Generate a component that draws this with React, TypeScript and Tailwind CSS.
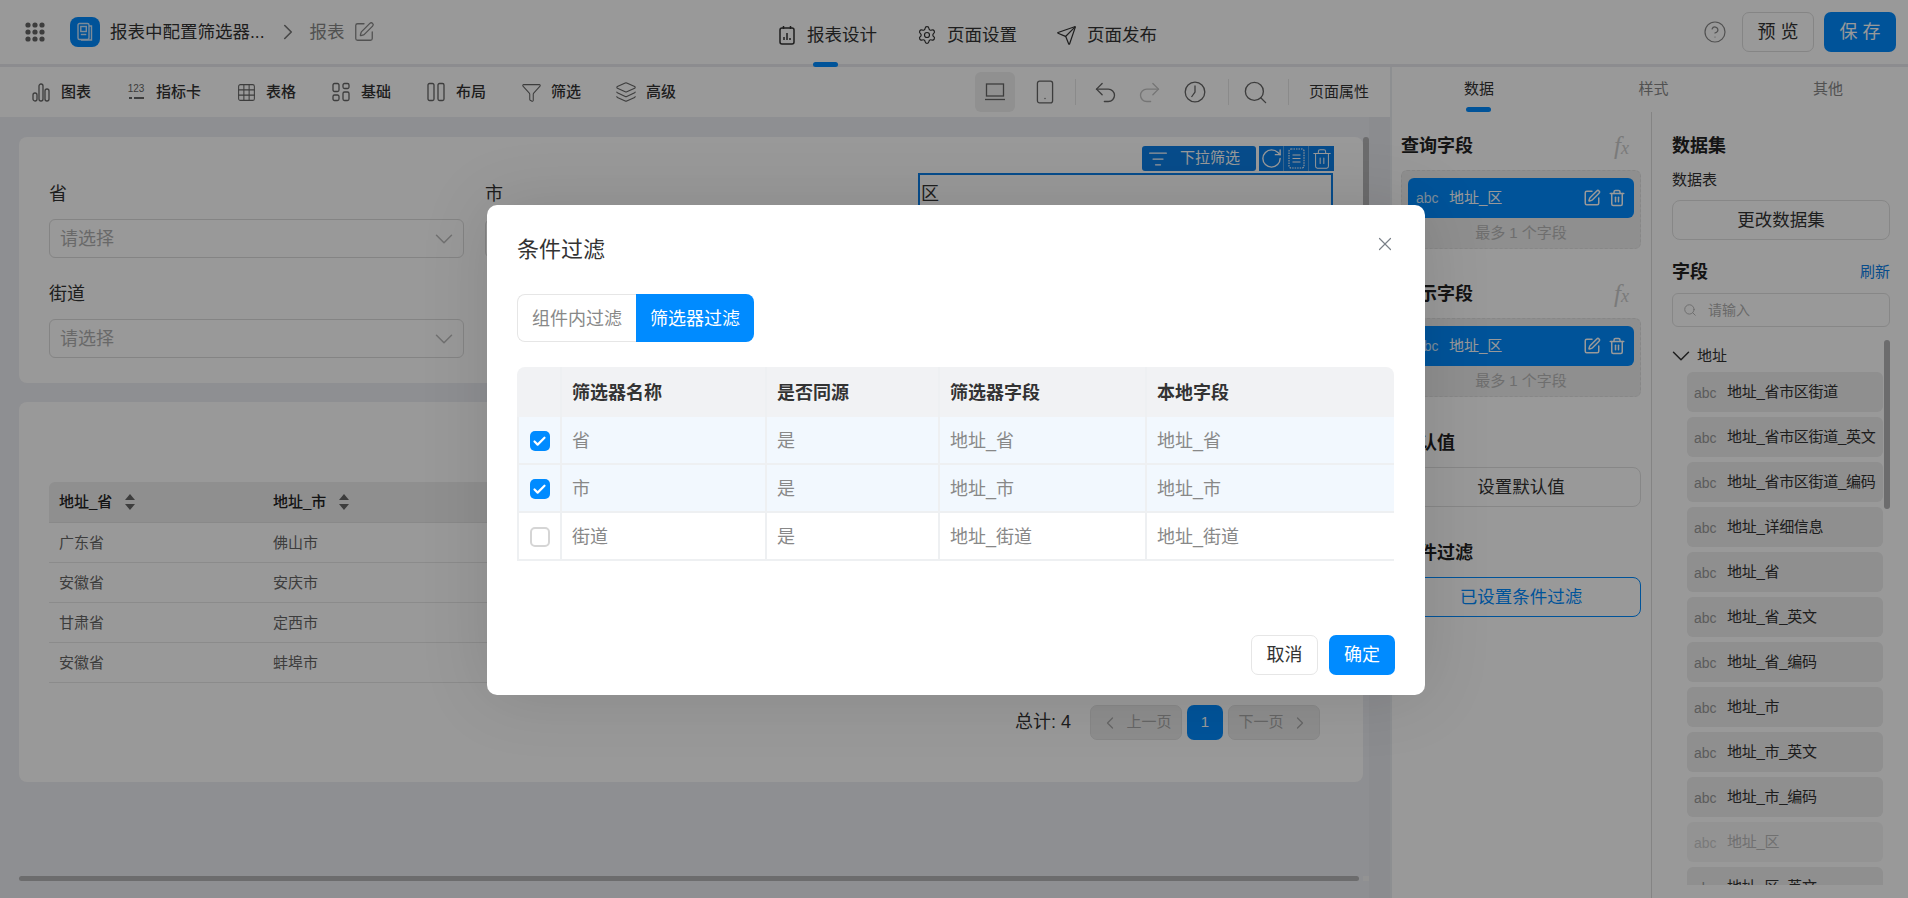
import { Undo2, Redo2, Smartphone, Search, Settings, Send, ChevronRight, ChevronDown, ChevronLeft, SquarePen, Trash2, CircleHelp, X, Check, Layers, Funnel, ListFilter, RotateCw, Grid3x3 } from "lucide-react";

const fields = [
  "地址_省市区街道",
  "地址_省市区街道_英文",
  "地址_省市区街道_编码",
  "地址_详细信息",
  "地址_省",
  "地址_省_英文",
  "地址_省_编码",
  "地址_市",
  "地址_市_英文",
  "地址_市_编码",
  "地址_区",
  "地址_区_英文",
];

const previewRows = [
  ["广东省", "佛山市"],
  ["安徽省", "安庆市"],
  ["甘肃省", "定西市"],
  ["安徽省", "蚌埠市"],
];

const filterRows = [
  { name: "省", same: "是", field: "地址_省", local: "地址_省", checked: true },
  { name: "市", same: "是", field: "地址_市", local: "地址_市", checked: true },
  { name: "街道", same: "是", field: "地址_街道", local: "地址_街道", checked: false },
];

function DotsIcon() {
  return (
    <svg width="20" height="20" viewBox="0 0 20 20" fill="#666">
      {[3, 10, 17].map((y) => [3, 10, 17].map((x) => <circle key={`${x}-${y}`} cx={x} cy={y} r="2.6" />))}
    </svg>
  );
}

function LogoIcon() {
  return (
    <div className="flex h-[30px] w-[30px] items-center justify-center rounded-[8px] bg-[#008bff]">
      <svg width="18" height="20" viewBox="0 0 18 20" fill="none" stroke="#cfe8ff" strokeWidth="1.4">
        <rect x="2" y="1.5" width="11" height="16" rx="1.5" />
        <path d="M13 4h2.5v14H5" />
        <rect x="4.8" y="4.5" width="5.5" height="5" />
        <path d="M4.8 12.5h5.5" />
      </svg>
    </div>
  );
}

function ReportIcon() {
  return (
    <svg width="16" height="20" viewBox="0 0 16 20" fill="none" stroke="#333" strokeWidth="1.5">
      <rect x="1" y="3" width="14" height="16" rx="2" />
      <path d="M4.5 1v3M11.5 1v3M5 15v-3M8 15V8M11 15v-2" />
    </svg>
  );
}

function BarsIcon() {
  return (
    <svg width="18" height="20" viewBox="0 0 18 20" fill="none" stroke="#666" strokeWidth="1.3">
      <rect x="1" y="11" width="4" height="8" rx="2" />
      <rect x="7" y="2" width="4" height="17" rx="2" />
      <rect x="13" y="7" width="4" height="12" rx="2" />
    </svg>
  );
}

function NumberIcon() {
  return (
    <span className="flex h-[20px] w-[18px] flex-col items-center text-[#666]">
      <span className="text-[10px] leading-[14px]">123</span>
      <span className="mt-[1px] flex items-center gap-[2px]">
        <span className="h-[2px] w-[3px] bg-[#666]" />
        <span className="h-[2px] w-[10px] bg-[#666]" />
      </span>
    </span>
  );
}

function BlocksIcon() {
  return (
    <svg width="18" height="20" viewBox="0 0 18 20" fill="none" stroke="#666" strokeWidth="1.3">
      <rect x="1" y="1.5" width="6" height="8" rx="1.5" />
      <rect x="11" y="1.5" width="6" height="5" rx="1.5" />
      <rect x="1" y="13" width="6" height="5.5" rx="1.5" />
      <rect x="11" y="10" width="6" height="8.5" rx="1.5" />
    </svg>
  );
}

function ColumnsIcon() {
  return (
    <svg width="18" height="20" viewBox="0 0 18 20" fill="none" stroke="#666" strokeWidth="1.3">
      <rect x="1" y="1.5" width="6" height="17" rx="1.5" />
      <rect x="11" y="1.5" width="6" height="17" rx="1.5" />
    </svg>
  );
}

function LaptopIcon() {
  return (
    <svg width="22" height="20" viewBox="0 0 22 20" fill="none" stroke="#666" strokeWidth="1.3">
      <rect x="2.5" y="2" width="17" height="12" />
      <path d="M1 17.5h20" />
    </svg>
  );
}

function ClockIcon() {
  return (
    <svg width="22" height="22" viewBox="0 0 22 22" fill="none" stroke="#666" strokeWidth="1.3">
      <circle cx="11" cy="11" r="9.8" />
      <path d="M11 4.5V11l-3.5 5" />
    </svg>
  );
}

function SortIcon() {
  return (
    <svg width="10" height="16" viewBox="0 0 10 16" fill="#666" className="ml-[13px]">
      <path d="M5 0l5 6H0zM5 16L0 10h10z" />
    </svg>
  );
}

function DashedDocIcon() {
  return (
    <svg width="17" height="21" viewBox="0 0 17 21" fill="none" stroke="#fff" strokeWidth="1.1">
      <rect x="1" y="1" width="15" height="19" rx="2" strokeDasharray="1.5 1" />
      <path d="M4.5 7h8M4.5 10.5h8M4.5 14h8" />
    </svg>
  );
}

function Fx() {
  return (
    <span className="ml-auto mr-[12px] h-[24px] font-['Liberation_Serif',serif] text-[25px] italic leading-[24px] text-[#ccc]">
      f<span className="text-[18px]">x</span>
    </span>
  );
}

function ToolItem({ icon, label }: { icon: React.ReactNode; label: string }) {
  return (
    <div className="flex items-center gap-[11px]">
      <span className="flex w-[18px] justify-center [&>svg]:shrink-0">{icon}</span>
      <span className="text-[15px] font-medium text-[#333]">{label}</span>
    </div>
  );
}

function NavItem({ icon, label }: { icon: React.ReactNode; label: string }) {
  return (
    <div className="flex items-center gap-[12px] text-[17.5px] text-[#333]">
      <span className="flex w-[17px] justify-center [&>svg]:shrink-0">{icon}</span>
      <span>{label}</span>
    </div>
  );
}

function SelectBox({ placeholder = "请选择" }: { placeholder?: string }) {
  return (
    <div className="mt-[13px] flex h-[39px] items-center justify-between rounded-[6px] border border-[#dcdcdc] bg-white pl-[10px] pr-[4px] text-[18px] text-[#b0b0b0]">
      <span className="pt-[2px]">{placeholder}</span>
      <ChevronDown size={30} strokeWidth={1.2} className="text-[#bbb]" />
    </div>
  );
}

function FieldChip() {
  return (
    <div className="flex h-[40px] items-center rounded-[6px] bg-[#008bff] pl-[8px] pr-[8px] text-white">
      <span className="w-[33px] text-[14px] text-[#cfe8ff]">abc</span>
      <span className="text-[15px]">地址_区</span>
      <SquarePen size={18} className="ml-auto" />
      <Trash2 size={18} className="ml-[7px]" />
    </div>
  );
}

function QueryBox() {
  return (
    <div className="mt-[12px] h-[79px] rounded-[6px] border border-dashed border-[#e2e2e2] bg-[#eeeeee] px-[6px] pt-[7px]">
      <FieldChip />
      <div className="mt-[5px] text-center text-[15px] leading-[20px] text-[#b8b8b8]">最多 1 个字段</div>
    </div>
  );
}

function Heading({ children }: { children: React.ReactNode }) {
  return <div className="text-[18px] font-bold leading-[24px] text-[#222]">{children}</div>;
}

function PageBtn({ children }: { children: React.ReactNode }) {
  return (
    <div className="flex h-[35px] w-[92px] items-center justify-center gap-[6px] rounded-[7px] border border-[#e2e2e2] bg-[#ececec] text-[15px] text-[#aaa]">
      {children}
    </div>
  );
}

function FormLabel({ children }: { children: React.ReactNode }) {
  return <div className="pt-[3px] leading-[23px]">{children}</div>;
}

function FilterModal() {
  const cols = "grid grid-cols-[43px_205px_173px_207px_249px]";
  const cell = "flex items-center border-l-2 border-[#eef0f2] pl-[10px] pt-[2px]";
  return (
    <div className="absolute left-[487px] top-[205px] h-[490px] w-[938px] rounded-[10px] bg-white px-[30px] shadow-[0_0_70px_rgba(0,0,0,0.12)]">
      <div className="pt-[30px] text-[22px] leading-[30px] text-[#333]">条件过滤</div>
      <X size={22} strokeWidth={1.3} className="absolute right-[29px] top-[28px] text-[#7a8088]" />

      <div className="mt-[29px] flex h-[48px] w-[237px] text-[18px]">
        <div className="flex w-[119px] items-center justify-center rounded-l-[8px] border border-r-0 border-[#e6e6e6] pt-[2px] text-[#888]">组件内过滤</div>
        <div className="flex w-[118px] items-center justify-center rounded-r-[8px] bg-[#008bff] pt-[2px] text-white">筛选器过滤</div>
      </div>

      <div className="mt-[25px] w-[877px] text-[18px]">
        <div className={`${cols} h-[50px] rounded-t-[8px] bg-[#f1f2f4] font-bold text-[#333]`}>
          <div />
          <div className={cell}>筛选器名称</div>
          <div className={cell}>是否同源</div>
          <div className={cell}>筛选器字段</div>
          <div className={cell}>本地字段</div>
        </div>
        {filterRows.map((row) => (
          <div key={row.name} className={`${cols} h-[48px] border-b-2 border-[#eef0f2] text-[#888] ${row.checked ? "bg-[#f2f8fe]" : "bg-white"}`}>
            <div className="flex items-center justify-center border-l-2 border-[#eef0f2] pt-[2px]">
              {row.checked ? (
                <span className="flex h-[20px] w-[20px] items-center justify-center rounded-[5px] bg-[#008bff] text-white">
                  <Check size={15} strokeWidth={3.5} />
                </span>
              ) : (
                <span className="h-[20px] w-[20px] rounded-[5px] border-2 border-[#d5d5d5] bg-white" />
              )}
            </div>
            <div className={cell}>{row.name}</div>
            <div className={cell}>{row.same}</div>
            <div className={cell}>{row.field}</div>
            <div className={cell}>{row.local}</div>
          </div>
        ))}
      </div>

      <div className="absolute bottom-[20px] right-[30px] flex gap-[11px] text-[18px]">
        <div className="flex h-[40px] w-[67px] items-center justify-center rounded-[7px] border border-[#e6e6e6] pt-[1px] text-[#333]">取消</div>
        <div className="flex h-[40px] w-[66px] items-center justify-center rounded-[7px] bg-[#008bff] pt-[1px] text-white">确定</div>
      </div>
    </div>
  );
}

export default function App() {
  return (
    <div className="relative h-[898px] w-[1908px] overflow-hidden bg-white font-['Liberation_Sans','Noto_Sans_CJK_SC',sans-serif] text-[#333]">
      {/* 顶栏 */}
      <header className="relative flex h-[67px] items-center border-b-[3px] border-[#e9eaee]">
        <div className="flex w-[778px] items-center pl-[25px]">
          <DotsIcon />
          <span className="ml-[25px]"><LogoIcon /></span>
          <span className="ml-[10px] pt-[1px] text-[17.5px]">报表中配置筛选器...</span>
          <ChevronRight size={26} strokeWidth={1.5} className="ml-[10px] text-[#777]" />
          <span className="ml-[9px] pt-[1px] text-[17.5px] text-[#888]">报表</span>
          <SquarePen size={22} strokeWidth={1.4} className="ml-[8px] text-[#888]" />
        </div>
        <div className="flex items-center gap-[41px] pt-[6px]">
          <NavItem icon={<ReportIcon />} label="报表设计" />
          <NavItem icon={<Settings size={20} strokeWidth={1.4} />} label="页面设置" />
          <NavItem icon={<Send size={21} strokeWidth={1.4} />} label="页面发布" />
        </div>
        <span className="absolute bottom-[-3px] left-[813px] h-[5px] w-[25px] rounded-full bg-[#008bff]" />
        <div className="ml-auto flex items-center pr-[12px]">
          <CircleHelp size={24} strokeWidth={1.2} className="text-[#888]" />
          <div className="ml-[15px] flex h-[40px] w-[72px] items-center justify-center rounded-[7px] border border-[#dedede] text-[18px]">预 览</div>
          <div className="ml-[10px] flex h-[40px] w-[72px] items-center justify-center rounded-[7px] bg-[#008bff] text-[18px] text-white">保 存</div>
        </div>
      </header>

      <div className="flex h-[831px]">
        <div className="flex w-[1390px] flex-col">
          {/* 工具栏 */}
          <div className="flex h-[50px] shrink-0 items-center pl-[32px] pr-[21px]">
            <div className="flex items-center gap-[36px]">
              <ToolItem icon={<BarsIcon />} label="图表" />
              <ToolItem icon={<NumberIcon />} label="指标卡" />
              <ToolItem icon={<Grid3x3 size={21} strokeWidth={1.2} className="text-[#666]" />} label="表格" />
              <ToolItem icon={<BlocksIcon />} label="基础" />
              <ToolItem icon={<ColumnsIcon />} label="布局" />
              <ToolItem icon={<Funnel size={21} strokeWidth={1.2} className="text-[#666]" />} label="筛选" />
              <ToolItem icon={<Layers size={22} strokeWidth={1.2} className="text-[#666]" />} label="高级" />
            </div>
            <div className="ml-auto flex items-center text-[#666]">
              <div className="flex h-[40px] w-[40px] items-center justify-center rounded-[6px] bg-[#f0f0f0]"><LaptopIcon /></div>
              <div className="ml-[10px] flex w-[40px] justify-center"><Smartphone size={26} strokeWidth={1.2} /></div>
              <span className="ml-[10px] h-[26px] w-px bg-[#e6e6e6]" />
              <div className="ml-[10px] flex w-[40px] justify-center"><Undo2 size={27} strokeWidth={1.2} /></div>
              <div className="ml-[4px] flex w-[40px] justify-center text-[#c4c4c4]"><Redo2 size={27} strokeWidth={1.2} /></div>
              <div className="ml-[5px] flex w-[40px] justify-center"><ClockIcon /></div>
              <span className="ml-[13px] h-[26px] w-px bg-[#e6e6e6]" />
              <div className="ml-[7px] flex w-[40px] justify-center"><Search size={27} strokeWidth={1.2} /></div>
              <span className="ml-[12px] h-[26px] w-px bg-[#e6e6e6]" />
              <span className="ml-[20px] text-[15px] text-[#333]">页面属性</span>
            </div>
          </div>

          {/* 画布 */}
          <div className="relative flex-1 overflow-hidden bg-[#edeef3] pl-[19px] pt-[20px]">
            <div className="relative h-[246px] w-[1344px] rounded-[8px] bg-white pl-[30px] pt-[43px]">
              <div className="grid grid-cols-[415px_415px_414px] gap-x-[21px] gap-y-[22px] text-[18px]">
                <div>
                  <FormLabel>省</FormLabel>
                  <SelectBox />
                </div>
                <div>
                  <FormLabel>市</FormLabel>
                  <SelectBox placeholder="" />
                </div>
                <div className="relative">
                  <FormLabel>区</FormLabel>
                  <SelectBox placeholder="" />
                  <div className="absolute -left-[3px] -top-[7px] h-[80px] w-[415px] border-2 border-[#0d7fe8]" />
                </div>
                <div>
                  <FormLabel>街道</FormLabel>
                  <SelectBox />
                </div>
              </div>
              <div className="absolute left-[1123px] top-[9px] flex h-[25px] gap-[3px] text-white">
                <div className="flex w-[114px] items-center gap-[12px] rounded-[3px] bg-[#0d7fe8] pl-[6px] text-[15px]">
                  <ListFilter size={20} strokeWidth={1.5} />
                  <span>下拉筛选</span>
                </div>
                <div className="flex w-[75px] divide-x divide-[#5aa9ef] bg-[#0d7fe8]">
                  <span className="flex w-[25px] items-center justify-center"><RotateCw size={23} strokeWidth={1.4} /></span>
                  <span className="flex w-[25px] items-center justify-center"><DashedDocIcon /></span>
                  <span className="flex w-[25px] items-center justify-center"><Trash2 size={22} strokeWidth={1.1} /></span>
                </div>
              </div>
            </div>

            <div className="mt-[19px] h-[380px] w-[1344px] rounded-[8px] bg-white px-[30px] pt-[80px]">
              <div className="flex h-[41px] items-center rounded-t-[6px] border-b border-[#e4e4e4] bg-[#eeeeee] text-[15px] font-medium text-[#222]">
                <div className="flex w-[214px] items-center pl-[10px]">地址_省<SortIcon /></div>
                <div className="flex w-[214px] items-center pl-[10px]">地址_市<SortIcon /></div>
              </div>
              {previewRows.map((row, i) => (
                <div key={i} className="flex h-[40px] items-center border-b border-[#e8e8e8] pt-[1px] text-[15px] text-[#666]">
                  <div className="w-[214px] pl-[10px]">{row[0]}</div>
                  <div className="w-[214px] pl-[10px]">{row[1]}</div>
                </div>
              ))}
              <div className="mt-[22px] flex items-center justify-end pr-[13px]">
                <span className="mr-[19px] text-[18px] text-[#333]">总计: 4</span>
                <PageBtn><ChevronLeft size={20} strokeWidth={1.5} />上一页</PageBtn>
                <div className="mx-[5px] flex h-[35px] w-[36px] items-center justify-center rounded-[7px] bg-[#008bff] text-[15px] text-white">1</div>
                <PageBtn>下一页<ChevronRight size={20} strokeWidth={1.5} /></PageBtn>
              </div>
            </div>

            {/* 滚动条 */}
            <span className="absolute left-[1363px] top-[20px] h-[500px] w-[6px] rounded-full bg-[#b4b4b6]" />
            <span className="absolute bottom-[17px] left-[19px] h-[5px] w-[1340px] rounded-full bg-[#b4b4b6]" />
            <span className="absolute bottom-[17px] left-[1363px] h-[5px] w-[6px] bg-[#f5f5f5]" />
            <span className="absolute inset-y-0 right-0 w-[21px] bg-[#e8e9ee]" />
          </div>
        </div>

        {/* 右侧面板 */}
        <aside className="flex w-[518px] flex-col border-l-2 border-[#eceef2]">
          <div className="relative grid h-[45px] shrink-0 grid-cols-[174px_175px_167px] items-center text-[15px] text-[#888]">
            <span className="text-center text-[#333]">数据</span>
            <span className="text-center">样式</span>
            <span className="pl-[72px]">其他</span>
            <span className="absolute bottom-0 left-[74px] h-[5px] w-[25px] rounded-full bg-[#008bff]" />
          </div>
          <div className="flex min-h-0 flex-1">
            <div className="w-[260px] shrink-0 border-r border-[#dcdcdc] pl-[9px] pr-[10px] pt-[22px]">
              <div className="flex items-center"><Heading>查询字段</Heading><Fx /></div>
              <QueryBox />
              <div className="mt-[33px] flex items-center"><Heading>显示字段</Heading><Fx /></div>
              <QueryBox />
              <div className="mt-[34px]"><Heading>默认值</Heading></div>
              <div className="mt-[12px] flex h-[40px] items-center justify-center rounded-[8px] border border-[#e2e2e2] text-[17.5px]">设置默认值</div>
              <div className="mt-[34px]"><Heading>条件过滤</Heading></div>
              <div className="mt-[12px] flex h-[40px] items-center justify-center rounded-[8px] border border-[#008bff] text-[17.5px] text-[#008bff]">已设置条件过滤</div>
            </div>

            <div className="relative min-w-0 flex-1 pl-[20px] pr-[18px] pt-[22px]">
              <Heading>数据集</Heading>
              <div className="mt-[12px] text-[15px] leading-[20px]">数据表</div>
              <div className="mt-[10px] flex h-[40px] items-center justify-center rounded-[8px] border border-[#e2e2e2] text-[17.5px]">更改数据集</div>
              <div className="mt-[20px] flex items-center justify-between">
                <Heading>字段</Heading>
                <span className="text-[15px] text-[#0d7fe8]">刷新</span>
              </div>
              <div className="mt-[9px] flex h-[34px] items-center rounded-[6px] border border-[#e2e2e2] pl-[10px] text-[14px] text-[#b0b0b0]">
                <Search size={14} strokeWidth={1.5} />
                <span className="ml-[11px]">请输入</span>
              </div>
              <div className="mt-[17px] flex h-[24px] items-center text-[15px]">
                <ChevronDown size={30} strokeWidth={1.2} className="-ml-[6px] shrink-0" />
                <span className="ml-[1px]">地址</span>
              </div>
              <div className="mt-[4px] flex h-[513px] flex-col gap-[5px] overflow-hidden pl-[15px]">
                {fields.map((f) => (
                  <div key={f} className={`flex h-[40px] w-[196px] shrink-0 items-center rounded-[6px] pl-[7px] ${f === "地址_区" ? "bg-[#f6f6f6] text-[#bbb]" : "bg-[#eeeeee] text-[#333]"}`}>
                    <span className={`mt-[2px] w-[33px] text-[14px] ${f === "地址_区" ? "text-[#ccc]" : "text-[#999]"}`}>abc</span>
                    <span className="whitespace-nowrap text-[15px] tracking-[-0.3px]">{f}</span>
                  </div>
                ))}
              </div>
              <span className="absolute left-[232px] top-[228px] h-[169px] w-[6px] rounded-full bg-[#b4b4b6]" />
            </div>
          </div>
        </aside>
      </div>

      {/* 遮罩和弹窗 */}
      <div className="absolute inset-0 bg-black/40" />
      <FilterModal />
    </div>
  );
}
